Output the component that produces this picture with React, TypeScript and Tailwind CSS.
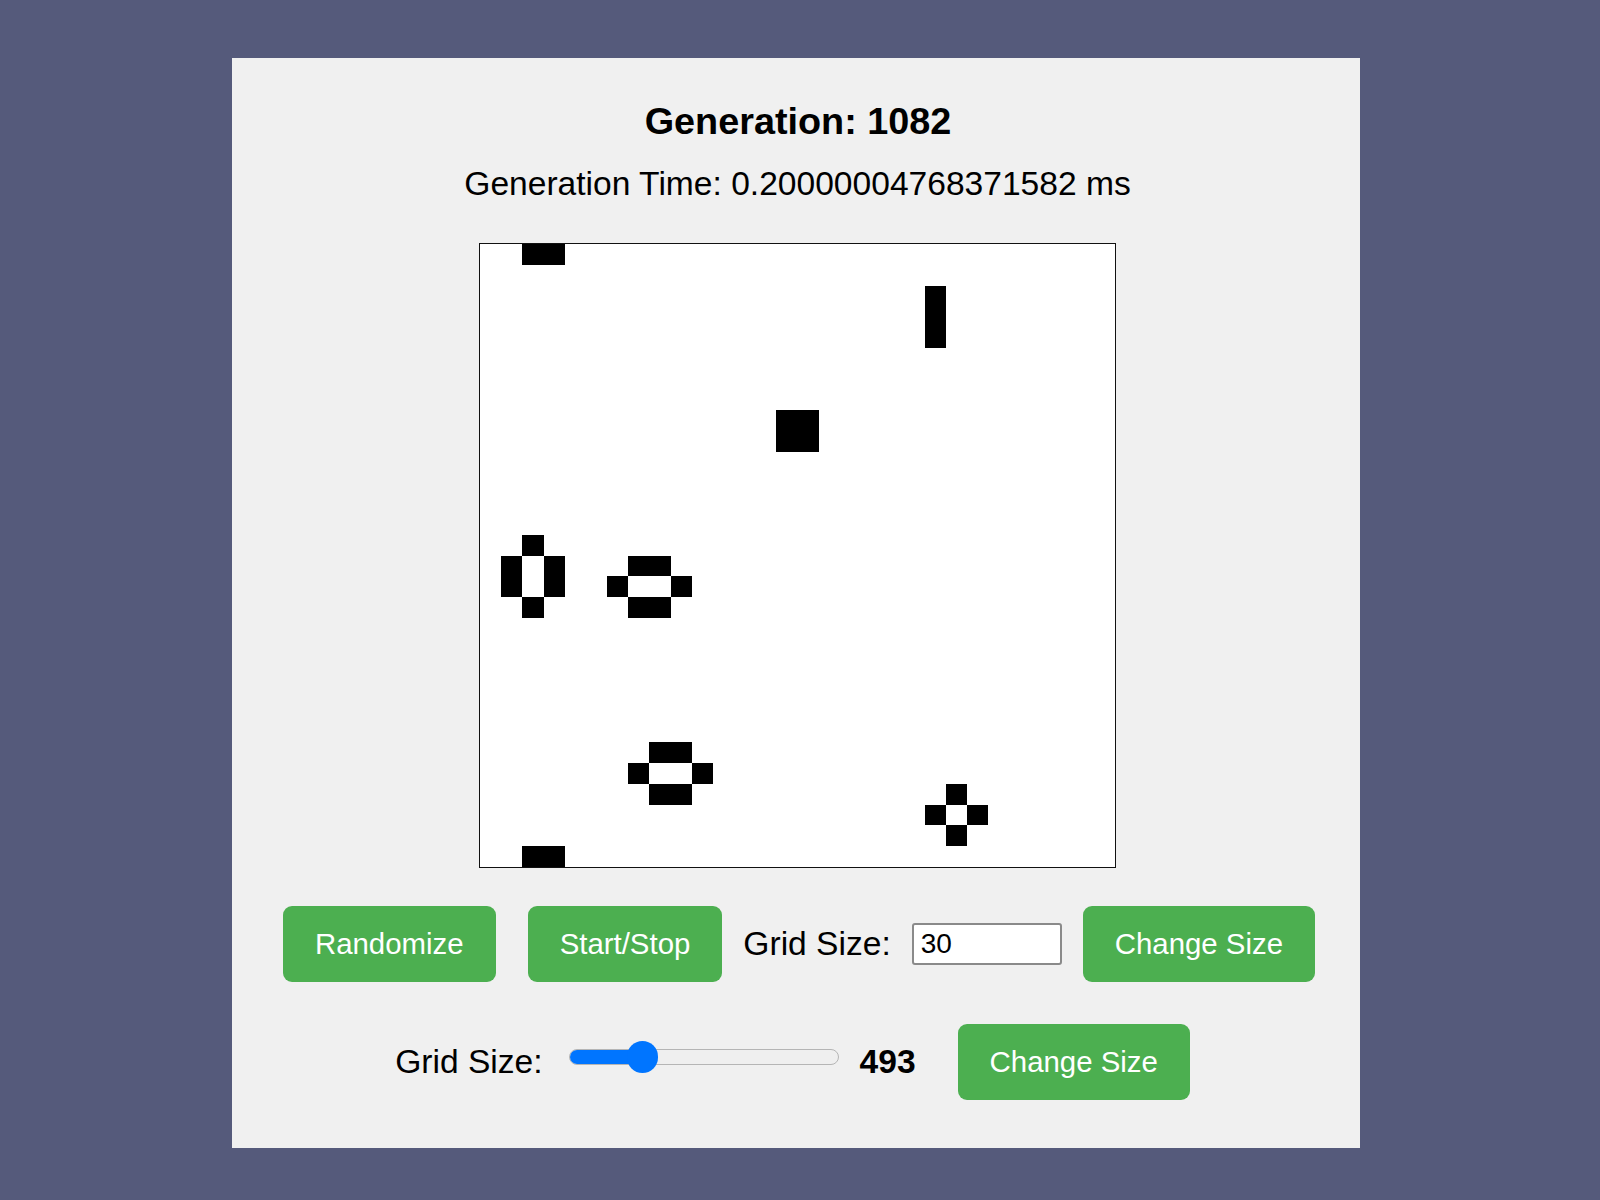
import React from "react";

const cells: [number, number][] = [
  [0, 2], [0, 3], [29, 2], [29, 3],
  [2, 21], [3, 21], [4, 21],
  [8, 14], [8, 15], [9, 14], [9, 15],
  [14, 2], [15, 1], [15, 3], [16, 1], [16, 3], [17, 2],
  [15, 7], [15, 8], [16, 6], [16, 9], [17, 7], [17, 8],
  [24, 8], [24, 9], [25, 7], [25, 10], [26, 8], [26, 9],
  [26, 22], [27, 21], [27, 23], [28, 22],
];

function Board() {
  return (
    <div className="w-[637px] h-[625px] border border-[#111] bg-white box-border">
      <svg
        width={635}
        height={623}
        viewBox="0 0 30 30"
        preserveAspectRatio="none"
        shapeRendering="crispEdges"
        className="block"
      >
        {cells.map(([r, c]) => (
          <rect key={`${r}-${c}`} x={c} y={r} width={1} height={1} fill="#000" />
        ))}
      </svg>
    </div>
  );
}

function GreenButton({ children, className = "" }: { children: React.ReactNode; className?: string }) {
  return (
    <button
      className={`h-[76px] px-[32px] bg-[#4caf50] text-white text-[29.4px] leading-[34px] rounded-[9px] flex items-center justify-center whitespace-nowrap ${className}`}
    >
      {children}
    </button>
  );
}

export default function App() {
  return (
    <div
      className="min-h-[1200px] w-full bg-[#555a7b] pt-[58px]"
      style={{ fontFamily: '"Liberation Sans", Arial, sans-serif' }}
    >
      <div className="ml-[232px] w-[1128px] h-[1090px] bg-[#f0f0f0] flex flex-col items-center pt-[41px] text-black">
        <h1 className="text-[37.8px] font-bold leading-[44px] pl-[4px]">Generation: 1082</h1>
        <p className="mt-[22px] text-[33.6px] leading-[38.6px] pl-[3px]">
          Generation Time: 0.20000004768371582 ms
        </p>
        <div className="mt-[39px] pl-[3px]">
          <Board />
        </div>
        <div className="mt-[38px] flex items-center pl-[6px]">
          <GreenButton>Randomize</GreenButton>
          <GreenButton className="ml-[32px]">Start/Stop</GreenButton>
          <span className="ml-[21px] text-[33.6px] leading-[38px]">Grid Size:</span>
          <div className="ml-[21px] w-[150px] h-[42px] bg-white border-[2px] border-[#8a8a8a] rounded-[3px] flex items-center pl-[7px] text-[28px] leading-[32px]">
            30
          </div>
          <GreenButton className="ml-[21px]">Change Size</GreenButton>
        </div>
        <div className="mt-[42px] flex items-center pr-[7px]">
          <span className="text-[33.6px] leading-[38px]">Grid Size:</span>
          <div className="ml-[26px] mb-[10px] relative w-[270px] h-[32px] flex items-center">
            <div className="w-full h-[16px] rounded-full bg-[#efefef] border border-[#b5b5b5] box-border relative overflow-hidden">
              <div className="absolute left-0 top-0 h-full w-[75px] bg-[#0075ff]" />
            </div>
            <div className="absolute left-[58px] top-0 w-[31px] h-[32px] rounded-full bg-[#0075ff]" />
          </div>
          <span className="ml-[21px] text-[33.6px] leading-[38px] font-bold">493</span>
          <GreenButton className="ml-[42px]">Change Size</GreenButton>
        </div>
      </div>
    </div>
  );
}
